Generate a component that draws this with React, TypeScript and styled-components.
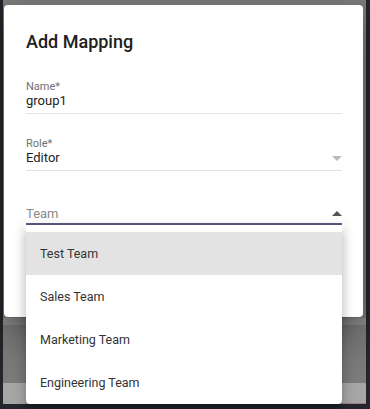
import React from "react";
import styled, { createGlobalStyle } from "styled-components";

const GlobalStyle = createGlobalStyle`
  html, body { margin: 0; padding: 0; background: #23272b; }
  body { font-family: Roboto, "Noto Sans", Arial, sans-serif; }
  * { box-sizing: border-box; }
`;

const Screen = styled.div`
  position: relative;
  width: 370px;
  height: 409px;
  background: #23272b;
  padding: 0 4px 5px 3px;
  overflow: hidden;
`;

const Page = styled.div`
  height: 100%;
  display: flex;
  flex-direction: column;
  background: #7b7b7b;
`;

const Band = styled.div<{ $h: number; $bg: string }>`
  height: ${(p) => p.$h}px;
  background: ${(p) => p.$bg};
  flex: none;
`;

const Fill = styled.div`
  flex: 1;
  background: #7b7b7b;
`;

const BottomBand = styled.div`
  height: 21px;
  background: #a6a6a6;
  display: flex;
  align-items: flex-end;
  justify-content: flex-end;
`;

const PinkLine = styled.div`
  width: 30px;
  height: 1px;
  background: #a77a8a;
`;

const Dialog = styled.div`
  position: absolute;
  left: 4px;
  top: 5px;
  width: 359px;
  height: 312px;
  background: #fff;
  border-radius: 4px;
  box-shadow: 0 11px 15px -7px rgba(0,0,0,0.2), 0 24px 38px 3px rgba(0,0,0,0.14), 0 9px 46px 8px rgba(0,0,0,0.12);
  padding: 23px 21px 0 22px;
  display: flex;
  flex-direction: column;
`;

const Title = styled.h2`
  margin: 0;
  font-size: 18px;
  font-weight: 500;
  color: #212121;
  line-height: 28px;
`;

const Fields = styled.div`
  display: flex;
  flex-direction: column;
  margin-top: 25px;
  gap: 24px;
`;

const Field = styled.div<{ $active?: boolean }>`
  position: relative;
  display: flex;
  flex-direction: column;
  border-bottom: ${(p) => (p.$active ? "2px solid #5c5b7e" : "1px solid #e3e3e3")};
  padding-bottom: ${(p) => (p.$active ? "1px" : "4px")};
`;

const Label = styled.label`
  font-size: 11px;
  color: #707070;
  line-height: 12px;
`;

const Value = styled.div<{ $placeholder?: boolean }>`
  font-size: 13px;
  line-height: 16px;
  color: ${(p) => (p.$placeholder ? "#8a8a8a" : "#222")};
`;

const Arrow = styled.span<{ $up?: boolean; $dark?: boolean }>`
  position: absolute;
  right: 0;
  bottom: ${(p) => (p.$up ? "7px" : "9px")};
  width: 0;
  height: 0;
  border-left: 5px solid transparent;
  border-right: 5px solid transparent;
  ${(p) =>
    p.$up
      ? `border-bottom: 5px solid ${p.$dark ? "#555" : "#bbb"};`
      : `border-top: 5px solid ${p.$dark ? "#555" : "#bbb"};`}
`;

const TeamField = styled(Field)`
  margin-top: 35px;
`;

const Menu = styled.ul`
  position: absolute;
  left: 26px;
  top: 225px;
  width: 316px;
  margin: 0;
  padding: 7px 0 0;
  list-style: none;
  background: #fff;
  border-radius: 0 0 4px 4px;
  box-shadow: 0 5px 5px -3px rgba(0,0,0,0.2), 0 8px 10px 1px rgba(0,0,0,0.14), 0 3px 14px 2px rgba(0,0,0,0.12);
`;

const Item = styled.li<{ $selected?: boolean }>`
  height: 43px;
  display: flex;
  align-items: center;
  padding-left: 14px;
  font-size: 12.5px;
  color: #333;
  background: ${(p) => (p.$selected ? "#e3e3e3" : "transparent")};
`;

const teams = ["Test Team", "Sales Team", "Marketing Team", "Engineering Team"];

export default function App() {
  return (
    <>
      <GlobalStyle />
      <Screen>
        <Page>
          <Band $h={318} $bg="#7b7b7b" />
          <Band $h={7} $bg="#8d8d8d" />
          <Fill />
          <BottomBand>
            <PinkLine />
          </BottomBand>
        </Page>
        <Dialog>
          <Title>Add Mapping</Title>
          <Fields>
            <Field>
              <Label>Name*</Label>
              <Value>group1</Value>
            </Field>
            <Field>
              <Label>Role*</Label>
              <Value>Editor</Value>
              <Arrow />
            </Field>
          </Fields>
          <TeamField $active>
            <Value $placeholder>Team</Value>
            <Arrow $up $dark />
          </TeamField>
        </Dialog>
        <Menu>
          {teams.map((t, i) => (
            <Item key={t} $selected={i === 0}>
              {t}
            </Item>
          ))}
        </Menu>
      </Screen>
    </>
  );
}
